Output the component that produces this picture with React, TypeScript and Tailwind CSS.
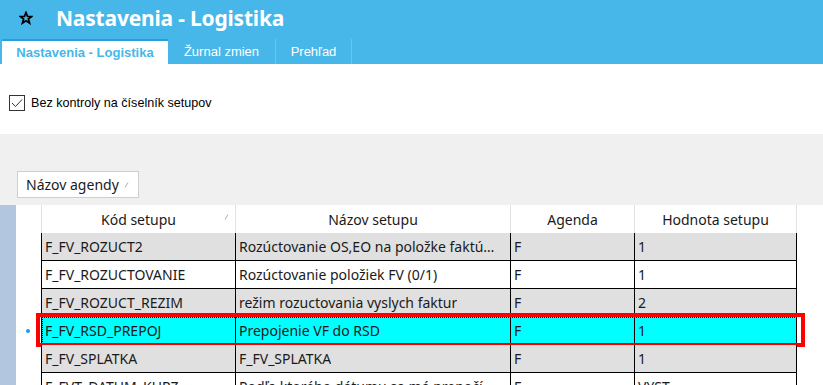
import React from "react"

type Row = { kod: string; nazov: string; agenda: string; hodnota: string; tone: "gray" | "white" | "sel" }

const rows: Row[] = [
  { kod: "F_FV_ROZUCT2", nazov: "Rozúctovanie OS,EO na položke faktú…", agenda: "F", hodnota: "1", tone: "gray" },
  { kod: "F_FV_ROZUCTOVANIE", nazov: "Rozúctovanie položiek FV (0/1)", agenda: "F", hodnota: "1", tone: "white" },
  { kod: "F_FV_ROZUCT_REZIM", nazov: "režim rozuctovania vyslych faktur", agenda: "F", hodnota: "2", tone: "gray" },
  { kod: "F_FV_RSD_PREPOJ", nazov: "Prepojenie VF do RSD", agenda: "F", hodnota: "1", tone: "sel" },
  { kod: "F_FV_SPLATKA", nazov: "F_FV_SPLATKA", agenda: "F", hodnota: "1", tone: "gray" },
  { kod: "F_FVT_DATUM_KURZ", nazov: "Podľa ktorého dátumu sa má prepočí…", agenda: "F", hodnota: "VYST", tone: "white" },
]

const SortMark = () => (
  <svg width="5" height="6" viewBox="0 0 5 6" className="shrink-0">
    <path d="M1 5.5 L4 0.5" stroke="#9a9a9a" strokeWidth="0.8" />
  </svg>
)

const App = () => {
  return (
    <div className="w-[823px] h-[385px] overflow-hidden bg-white" style={{ fontFamily: '"Noto Sans", sans-serif' }}>
      {/* Header */}
      <div className="h-[64px] bg-[#47b6e8] flex flex-col">
        <div className="h-[39px] flex items-center">
          <svg width="14" height="14" viewBox="0 0 24 24" className="ml-[19px] mb-[3px]">
            <path
              d="M12 2.5 L14.6 9.2 L21.7 9.4 L16.1 13.8 L18.1 20.7 L12 16.6 L5.9 20.7 L7.9 13.8 L2.3 9.4 L9.4 9.2 Z"
              fill="none"
              stroke="#000"
              strokeWidth="3"
              strokeLinejoin="miter"
            />
          </svg>
          <h1 className="ml-[23px] mb-[3px] text-[21px] font-bold text-white leading-none tracking-[-0.2px]">Nastavenia - Logistika</h1>
        </div>
        <div className="h-[25px] flex items-stretch text-[13px]" style={{ fontFamily: '"Liberation Sans", sans-serif' }}>
          <div className="ml-[2px] w-[166px] bg-white border-t-2 border-[#2a9fd9] flex items-center justify-center font-bold text-[#47b6e8]">
            Nastavenia - Logistika
          </div>
          <div className="w-[108px] flex items-center justify-center text-white border-r border-[#c9a88a]">Žurnal zmien</div>
          <div className="w-[76px] flex items-center justify-center text-white border-r border-[#c9a88a]">Prehľad</div>
        </div>
      </div>

      {/* Options panel */}
      <div className="h-[70px] bg-white pt-[30px] pl-[9px]">
        <label className="flex items-center gap-[6px] text-[12.6px] text-black" style={{ fontFamily: '"Liberation Sans", sans-serif' }}>
          <span className="w-[16px] h-[16px] border border-[#333] bg-white flex items-center justify-center">
            <svg width="12" height="10" viewBox="0 0 12 10">
              <path d="M1 5 L4.5 8.5 L11 1.5" fill="none" stroke="#333" strokeWidth="1" />
            </svg>
          </span>
          Bez kontroly na číselník setupov
        </label>
      </div>

      {/* Group panel */}
      <div className="h-[71px] bg-[#f0f0f0] pt-[37px] pl-[17px]">
        <div className="w-[122px] h-[27px] bg-white border border-[#cfcfcf] flex items-center pl-[8px] gap-[5px] text-[14px] text-[#1a1a1a]">
          Názov agendy
          <SortMark />
        </div>
      </div>

      {/* Grid */}
      <div className="flex">
        <div className="w-[16px] bg-[#b3c6df] h-[180px]" />
        <div className="flex flex-col">
          {/* Column header */}
          <div className="flex h-[28px] text-[14px] text-[#1a1a1a]">
            <div className="w-[25px]" />
            <div className="w-[195px] flex items-center justify-center relative border-l border-r border-[#e3e3e3]">
              Kód setupu
              <span className="absolute right-[6px] top-[9px]"><SortMark /></span>
            </div>
            <div className="w-[275px] flex items-center justify-center border-r border-[#e3e3e3]">Názov setupu</div>
            <div className="w-[124px] flex items-center justify-center border-r border-[#e3e3e3]">Agenda</div>
            <div className="w-[162px] flex items-center justify-center border-r border-[#e3e3e3]">Hodnota setupu</div>
          </div>
          {/* Rows */}
          {rows.map((r) => {
            const bg = r.tone === "gray" ? "bg-[#e0e0e0]" : r.tone === "sel" ? "bg-[#00ffff]" : "bg-white"
            return (
              <div key={r.kod} className="flex h-[28px] text-[14px] text-[#1a1a1a]">
                <div className="w-[25px] flex items-center justify-center bg-white">
                  {r.tone === "sel" && <span className="w-[4px] h-[4px] rounded-full bg-[#2196f3] ml-[-2px]" />}
                </div>
                <div className={`relative flex border-l border-b border-black ${bg}`}>
                  <div className="w-[194px] px-[3px] flex items-center truncate border-r border-black">{r.kod}</div>
                  <div className="w-[275px] px-[3px] flex items-center border-r border-black overflow-hidden">
                    <span className="truncate">{r.nazov}</span>
                  </div>
                  <div className="w-[124px] px-[3px] flex items-center border-r border-black">{r.agenda}</div>
                  <div className="w-[162px] px-[3px] flex items-center border-r border-black">{r.hodnota}</div>
                  {r.tone === "sel" && (
                    <>
                      <div className="absolute inset-0 border border-dotted border-black pointer-events-none" />
                      <div className="absolute -top-[4px] -bottom-[3px] -left-[6px] -right-[8px] border-4 border-[#ff0000] pointer-events-none" />
                    </>
                  )}
                </div>
              </div>
            )
          })}
        </div>
      </div>
    </div>
  )
}

export default App
